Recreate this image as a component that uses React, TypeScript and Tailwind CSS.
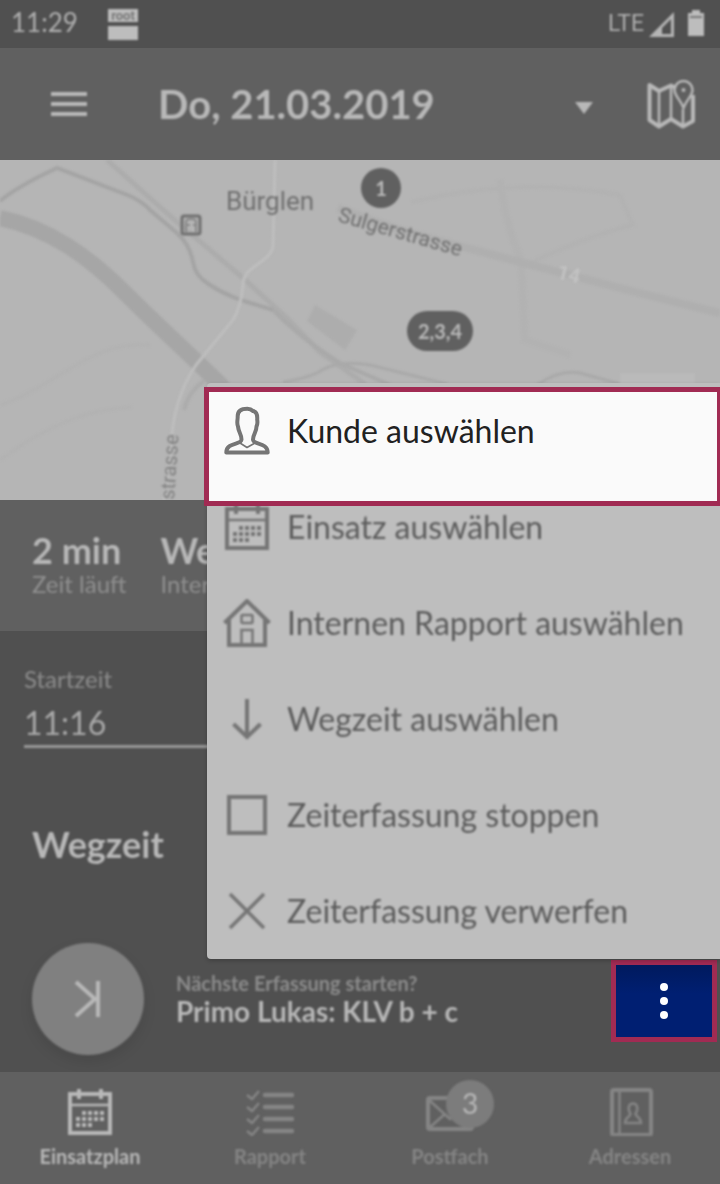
import { useState } from "react";
import type { ReactNode } from "react";

function CalendarIcon() {
  const dots = [
    [18, 25], [24, 25], [30, 25], [36, 25],
    [12, 31], [18, 31], [24, 31], [30, 31], [36, 31],
    [12, 37], [18, 37], [24, 37],
  ];
  return (
    <svg viewBox="0 0 48 48" className="size-12" fill="none" stroke="currentColor" aria-hidden="true">
      <path d="M4 6H44V45H4Z" strokeWidth="4" />
      <path d="M4 17H44" strokeWidth="2.5" />
      <path d="M13 1V11M35 1V11" strokeWidth="4" />
      {dots.map(([x, y]) => (
        <rect key={`${x}-${y}`} x={x - 2} y={y - 2} width="4" height="4" fill="currentColor" stroke="none" />
      ))}
    </svg>
  );
}

function PersonIcon() {
  return (
    <svg viewBox="0 0 48 52" className="h-[52px] w-12" fill="none" stroke="currentColor" strokeWidth="4" strokeLinejoin="round" aria-hidden="true">
      <path d="M18.500 34.500C18.500 29 15.500 27.500 15 21.500C13.600 18.500 14.500 16.500 14.700 12C14.400 6 18 3.800 24.300 3.800C27 3.800 28.500 4.500 30 6C34 6.500 34.500 10 34.200 14.500C34.400 17 35 18.500 33.500 21.500C33.500 27.500 30 29 30 34.500C30 40 44.500 37 44.700 47.500H3.300C3.500 37 18.500 40 18.500 34.500Z" />
      <path d="M17 38L24 42.500L32 38" strokeWidth="1.600" />
    </svg>
  );
}

function HouseIcon() {
  return (
    <svg viewBox="0 0 48 48" className="size-12" fill="none" stroke="currentColor" aria-hidden="true">
      <path d="M1.500 24L24 2L46.500 24" strokeWidth="4" />
      <path d="M6 21V46H42V21" strokeWidth="4" />
      <rect x="18.500" y="16" width="11" height="8" rx="1" strokeWidth="2.500" />
      <path d="M18.500 46V31H29.500V46" strokeWidth="2.500" />
    </svg>
  );
}

function ArrowDownIcon() {
  return (
    <svg viewBox="0 0 48 48" className="size-12" fill="none" stroke="currentColor" strokeWidth="4" aria-hidden="true">
      <path d="M24 4V42M10.500 29L24 42L37.500 29" />
    </svg>
  );
}

function SquareIcon() {
  return (
    <svg viewBox="0 0 48 48" className="size-12" fill="none" stroke="currentColor" strokeWidth="4" aria-hidden="true">
      <rect x="6" y="6" width="36" height="36" />
    </svg>
  );
}

function CrossIcon() {
  return (
    <svg viewBox="0 0 48 48" className="size-12" fill="none" stroke="currentColor" strokeWidth="3.500" aria-hidden="true">
      <path d="M7 7L41 41M41 7L7 41" />
    </svg>
  );
}

function ChecklistIcon() {
  return (
    <svg viewBox="0 0 48 48" className="size-12" fill="none" stroke="currentColor" aria-hidden="true">
      {[7, 19, 31, 43].map((y) => (
        <g key={y}>
          <path d={`M1 ${y}L6 ${y + 4}L13 ${y - 4}`} strokeWidth="2.500" />
          <path d={`M19 ${y}H46`} strokeWidth="4.500" strokeLinecap="round" />
        </g>
      ))}
    </svg>
  );
}

function EnvelopeIcon() {
  return (
    <svg viewBox="0 0 48 48" className="size-12" fill="none" stroke="currentColor" aria-hidden="true">
      <rect x="2" y="10" width="44" height="31" rx="2" strokeWidth="4" />
      <path d="M3 12L24 31L45 12M3 40L19 26M45 40L29 26" strokeWidth="2.500" />
    </svg>
  );
}

function AddressBookIcon() {
  return (
    <svg viewBox="0 0 48 48" className="size-12" fill="none" stroke="currentColor" aria-hidden="true">
      <rect x="6" y="2" width="39" height="45" rx="2" strokeWidth="4" />
      <path d="M13.500 2V46" strokeWidth="2.500" />
      <path d="M24.500 26C21 20 23 15.500 27 15.500S33 20 29.500 26C30 29 35 29 35 35H19C19 29 24 29 24.500 26Z" strokeWidth="2.500" />
    </svg>
  );
}

function MapPinIcon() {
  return (
    <svg viewBox="0 0 48 50" className="h-[50px] w-12" fill="none" stroke="currentColor" strokeLinejoin="round" aria-hidden="true">
      <path d="M29 9L24 6.500L12 12L2.500 6V41L12 47.500L24 40L36 47.500L46 42V16" strokeWidth="4" />
      <path d="M12 12V46M24 7V40M36 30V46" strokeWidth="2.500" />
      <path d="M36.500 29C34 21 27.500 17 27.500 11A9 9 0 0 1 45.500 11C45.500 17 39 21 36.500 29Z" strokeWidth="2.500" />
      <circle cx="36.500" cy="11" r="2" fill="currentColor" stroke="none" />
    </svg>
  );
}

function StatusBar() {
  return (
    <div className="h-12 bg-[#505050] text-[#b0b0b0]">
      <div className="flex h-12 items-center justify-between pr-4 pl-[11px] blur-[1px]">
        <div className="flex items-center gap-[30px]">
          <span className="pb-1 text-[26px]">11:29</span>
          <svg viewBox="0 0 30 32" className="h-8 w-[30px]" aria-hidden="true">
            <path d="M0 1H30V14H0ZM0 18H30V32H0Z" fill="#bdbdbd" />
            <text x="15" y="12" textAnchor="middle" fontFamily="Roboto, sans-serif" fontWeight="700" fontSize="13" fill="#777">root</text>
          </svg>
        </div>
        <div className="flex items-center gap-1">
          <span className="font-[Roboto,sans-serif] text-[23px]">LTE</span>
          <svg viewBox="0 0 56 28" className="h-7 w-14" aria-hidden="true">
            <path d="M1 27L26 2V27Z" fill="#b5b5b5" />
            <path d="M14 18L23 9V24H14Z" fill="#505050" />
            <path d="M40 3H44V0H52V3H56V26H40V3Z" fill="#bdbdbd" />
            <path d="M42 7H54" stroke="#777" strokeWidth="2" />
          </svg>
        </div>
      </div>
    </div>
  );
}

function Header() {
  return (
    <header className="h-28 bg-[#606060] text-[#b8b8b8]">
      <div className="flex h-28 items-center pr-[25px] pl-[50px] blur-[1px]">
        <button type="button" aria-label="Menü">
          <svg viewBox="0 0 38 26" className="h-[26px] w-[38px]" stroke="currentColor" strokeWidth="4" aria-hidden="true">
            <path d="M1 3H37M1 13H37M1 23H37" />
          </svg>
        </button>
        <button type="button" className="ml-[70px] flex flex-1 items-center justify-between text-left text-[40px] font-bold">
          <span>Do, 21.03.2019</span>
          <svg viewBox="0 0 18 12" className="mt-2 h-3 w-[18px]" fill="currentColor" aria-hidden="true">
            <path d="M0 0H18L9 12Z" />
          </svg>
        </button>
        <button type="button" aria-label="Karte" className="ml-[54px]">
          <MapPinIcon />
        </button>
      </div>
    </header>
  );
}

function MapView() {
  return (
    <section aria-label="Karte" className="relative h-[340px] overflow-hidden bg-[#b5b5b5]">
      <svg viewBox="0 0 720 340" preserveAspectRatio="xMidYMid slice" className="h-full w-full blur-[1px]" fill="none" role="img" aria-label="Bürglen">
        <g stroke="#b2b2b2" strokeWidth="7">
          <path d="M412 42C470 28 540 20 620 35Q627 52 633 65Q590 75 530 103" strokeWidth="4" />
          <path d="M500 20Q505 65 521 100L525 180L570 195" />
          <path d="M0 245C60 225 90 180 150 185M0 300C55 260 90 250 132 247" strokeWidth="3" />
        </g>
        <path d="M338 48L400 70L467 88L577 117L647 135L720 153" stroke="#afafaf" strokeWidth="8" />
        <path d="M107 0L177 62L243 118L287 158L320 192L365 224" stroke="#acacac" strokeWidth="5" />
        <path d="M0 41Q18 26 57 8L130 36Q143 42 150 50L177 73Q190 85 193 102Q195 115 207 123C230 139 252 143 273 150" stroke="#a4a4a4" strokeWidth="4" />
        <path d="M273 150Q300 178 340 203L390 225" stroke="#a9a9a9" strokeWidth="4" />
        <path d="M0 58C50 68 90 98 125 133S175 180 224 228" stroke="#a6a6a6" strokeWidth="16" />
        <path d="M283 222Q310 218 322 210Q340 200 370 205L447 224M537 225Q560 209 580 213L620 224" stroke="#a9a9a9" strokeWidth="3" />
        <path d="M315 145L357 170L345 190L307 161Z" fill="#adadad" />
        <path d="M620 213H695V232H620Z" fill="#bababa" />
        <path d="M275 0L273 86Q272 94 262 101L250 110Q243 116 243 125Q241 147 233 160L196 205Q172 240 171 290L164 340" stroke="#bebebe" strokeWidth="3" />
        <path d="M205 220Q188 232 184 250" stroke="#acacac" strokeWidth="4" />
        <rect x="182" y="56" width="18" height="18" rx="2" stroke="#707070" strokeWidth="3" />
        <path d="M186 72V62Q186 59 191 59T196 62V72M187 65H190M193 65H196" stroke="#888" strokeWidth="2" />
        <g fontFamily="Roboto, sans-serif">
          <text x="226" y="50" fontSize="26" fill="#707070">Bürglen</text>
          <text transform="translate(337 61) rotate(16)" fontSize="21" fill="#707070">Sulgerstrasse</text>
          <text transform="translate(556 118) rotate(14)" fontSize="20" fontWeight="700" fill="#c2c2c2">14</text>
          <text transform="translate(174 340) rotate(-86)" fontSize="20" fill="#808080">strasse</text>
        </g>
      </svg>
      <span className="absolute top-2 left-[361px] flex size-10 items-center justify-center rounded-full bg-[#606060] text-xl font-bold text-[#b8b8b8] blur-[1px]">1</span>
      <span className="absolute top-[151px] left-[407px] flex h-10 w-[66px] items-center justify-center rounded-full bg-[#606060] text-xl font-bold text-[#b8b8b8] blur-[1px]">2,3,4</span>
    </section>
  );
}

function Metric({ title, note }: { title: string; note: string }) {
  return (
    <div>
      <p className="text-4xl leading-9 font-bold text-[#b8b8b8]">{title}</p>
      <p className="text-2xl leading-8 text-[#909090]">{note}</p>
    </div>
  );
}

const menuItems: { label: string; icon: ReactNode }[] = [
  { label: "Einsatz auswählen", icon: <CalendarIcon /> },
  { label: "Internen Rapport auswählen", icon: <HouseIcon /> },
  { label: "Wegzeit auswählen", icon: <ArrowDownIcon /> },
  { label: "Zeiterfassung stoppen", icon: <SquareIcon /> },
  { label: "Zeiterfassung verwerfen", icon: <CrossIcon /> },
];

function ActionMenu() {
  return (
    <ul className="absolute top-[383px] right-0 w-[513px] rounded-l-sm bg-[#bebebe] text-[32px] shadow-[0_2px_4px_rgba(0,0,0,0.2)]">
      <li className="relative h-24">
        <button type="button" className="absolute top-1 -right-[2px] -left-[3px] z-10 flex h-[119px] items-start gap-4 border-[5px] border-[#a12b53] bg-[#fafafa] pt-[13px] pl-[14px] text-left text-[#212121]">
          <span className="text-[#757575]">
            <PersonIcon />
          </span>
          <span className="leading-[52px]">Kunde auswählen</span>
        </button>
      </li>
      {menuItems.map((item) => (
        <li key={item.label}>
          <button type="button" className="flex h-24 w-full items-center gap-4 pl-4 text-left text-[#5c5c5c] blur-[1px]">
            <span className="text-[#757575]">{item.icon}</span>
            <span>{item.label}</span>
          </button>
        </li>
      ))}
    </ul>
  );
}

function NextEntry() {
  return (
    <div className="flex items-center pr-[3px] pl-8">
      <button type="button" aria-label="Nächste Erfassung starten" className="flex size-28 items-center justify-center rounded-full bg-[#808080] text-[#b8b8b8] shadow-[0_6px_14px_rgba(0,0,0,0.1)] blur-[1px]">
        <svg viewBox="0 0 28 38" className="h-[38px] w-7" fill="none" stroke="currentColor" strokeWidth="4" aria-hidden="true">
          <path d="M2 2L21 19L2 36M24 1V37" />
        </svg>
      </button>
      <div className="ml-8 flex-1 pb-1 blur-[1px]">
        <p className="text-xl leading-7 font-bold text-[#8c8c8c]">Nächste Erfassung starten?</p>
        <p className="text-[28px] leading-7 font-bold text-[#b8b8b8]">Primo Lukas: KLV b + c</p>
      </div>
      <button type="button" aria-label="Weitere Aktionen" className="mt-1 flex h-[82px] w-[106px] items-center justify-center border-[5px] border-[#a12b53] bg-linear-to-b from-[#001a5e] to-[#001f72] to-40%">
        <svg viewBox="0 0 8 36" className="h-9 w-2" fill="#fff" aria-hidden="true">
          <circle cx="4" cy="4" r="4" />
          <circle cx="4" cy="18" r="4" />
          <circle cx="4" cy="32" r="4" />
        </svg>
      </button>
    </div>
  );
}

const tabs: { label: string; icon: ReactNode; badge?: string }[] = [
  { label: "Einsatzplan", icon: <CalendarIcon /> },
  { label: "Rapport", icon: <ChecklistIcon /> },
  { label: "Postfach", icon: <EnvelopeIcon />, badge: "3" },
  { label: "Adressen", icon: <AddressBookIcon /> },
];

function TabBar() {
  return (
    <nav className="h-28 bg-[#606060]">
      <div className="grid h-28 grid-cols-4 blur-[1px]">
        {tabs.map((tab, index) => (
          <a
            key={tab.label}
            href={`#${tab.label.toLowerCase()}`}
            aria-current={index === 0 ? "page" : undefined}
            className={`flex flex-col items-center gap-[6px] pt-4 text-xl font-bold ${index === 0 ? "text-[#b8b8b8]" : "text-[#858585]"}`}
          >
            <span className="relative">
              {tab.icon}
              {tab.badge && (
                <span className="absolute -top-2 left-5 flex size-12 items-center justify-center rounded-full bg-[#7c7c7c] text-[28px] font-normal text-[#b8b8b8]">
                  {tab.badge}
                </span>
              )}
            </span>
            <span>{tab.label}</span>
          </a>
        ))}
      </div>
    </nav>
  );
}

export default function App() {
  const [startTime, setStartTime] = useState("11:16");
  return (
    <div className="relative flex min-h-screen flex-col overflow-x-hidden bg-[#505050] font-[Lato,sans-serif]">
      <StatusBar />
      <Header />
      <MapView />
      <section className="h-[131px] bg-[#606060]">
        <div className="flex gap-[34px] pt-8 pl-8 blur-[1px]">
          <Metric title="2 min" note="Zeit läuft" />
          <Metric title="Wegzeit" note="Interne Zeit" />
        </div>
      </section>
      <main className="flex flex-1 flex-col">
        <div className="px-6 pt-8 blur-[1px]">
          <label htmlFor="start-time" className="block text-2xl leading-8 text-[#8c8c8c]">
            Startzeit
          </label>
          <input
            id="start-time"
            type="text"
            value={startTime}
            onChange={(event) => setStartTime(event.target.value)}
            className="block h-[53px] w-full border-b-[3px] border-[#989898] pt-1 text-[32px] text-[#a8a8a8] outline-none"
          />
        </div>
        <h2 className="mt-[72px] mb-[75px] pl-8 text-4xl leading-12 font-bold text-[#b8b8b8] blur-[1px]">Wegzeit</h2>
        <NextEntry />
      </main>
      <TabBar />
      <ActionMenu />
    </div>
  );
}
